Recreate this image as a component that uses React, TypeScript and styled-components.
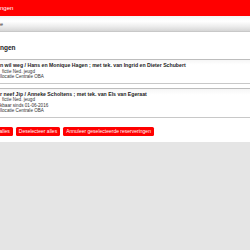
import React from 'react';
import styled, { createGlobalStyle } from 'styled-components';

const GlobalStyle = createGlobalStyle`
  html, body {
    margin: 0;
    padding: 0;
    background: #e5e5e5;
    font-family: "Liberation Sans", Arial, sans-serif;
    color: #333;
  }
`;

const Page = styled.div`
  width: 250px;
  overflow: hidden;
`;

const Header = styled.div`
  height: 16px;
  line-height: 16px;
  background: #ff0000;
  color: #fff;
  font-size: 6px;
  white-space: nowrap;
`;

const Toolbar = styled.div`
  height: 15px;
  line-height: 17px;
  background: linear-gradient(#f3f3f3 0%, #ffffff 35%, #ececec 70%, #d6d6d6 100%);
  border-bottom: 1px solid #c8c8c8;
  font-size: 5.5px;
  color: #333;
  white-space: nowrap;
`;

const Content = styled.div`
  background: #fff;
  padding: 12px 0 6px;
`;

const SectionTitle = styled.h2`
  margin: 0 0 7px;
  font-size: 6.5px;
  font-weight: bold;
  line-height: 8px;
  color: #222;
  white-space: nowrap;
`;

const List = styled.div`
  display: flex;
  flex-direction: column;
  gap: 4px;
`;

const Card = styled.div`
  border-top: 1px solid #bdbdbd;
  border-bottom: 1px solid #c8c8c8;
  background: linear-gradient(#f6f6f6, #fff 20%);
  padding: 2px 0 3px;
  white-space: nowrap;
`;

const Title = styled.div`
  font-size: 5.2px;
  font-weight: bold;
  line-height: 6.5px;
  color: #222;
`;

const Meta = styled.div<{ $indent?: number }>`
  font-size: 4.6px;
  line-height: 5.5px;
  color: #333;
  padding-left: ${({ $indent }) => $indent ?? 0}px;
`;

const Buttons = styled.div`
  display: flex;
  gap: 3px;
  margin-top: 9px;
  margin-left: -26px;
`;

const Button = styled.button`
  height: 9px;
  padding: 0 3px;
  border: none;
  border-radius: 1.5px;
  background: #ff0000;
  color: #fff;
  font-family: "Liberation Sans", Arial, sans-serif;
  font-size: 5px;
  line-height: 9px;
  white-space: nowrap;
  flex-shrink: 0;
`;

const items = [
  {
    title: 'n wil weg / Hans en Monique Hagen ; met tek. van Ingrid en Dieter Schubert',
    meta: ['fictie Ned. jeugd', 'llocatie Centrale OBA'],
  },
  {
    title: 'r neef Jip / Anneke Scholtens ; met tek. van Els van Egeraat',
    meta: ['fictie Ned. jeugd', 'kbaar sinds 01-06-2016', 'llocatie Centrale OBA'],
  },
];

export default function App() {
  return (
    <Page>
      <GlobalStyle />
      <Header>ngen</Header>
      <Toolbar>e</Toolbar>
      <Content>
        <SectionTitle>ngen</SectionTitle>
        <List>
          {items.map((item) => (
            <Card key={item.title}>
              <Title>{item.title}</Title>
              {item.meta.map((m, i) => (
                <Meta key={m} $indent={i === 0 ? 2 : 0}>{m}</Meta>
              ))}
            </Card>
          ))}
        </List>
        <Buttons>
          <Button>Selecteer alles</Button>
          <Button>Deselecteer alles</Button>
          <Button>Annuleer geselecteerde reserveringen</Button>
        </Buttons>
      </Content>
    </Page>
  );
}
